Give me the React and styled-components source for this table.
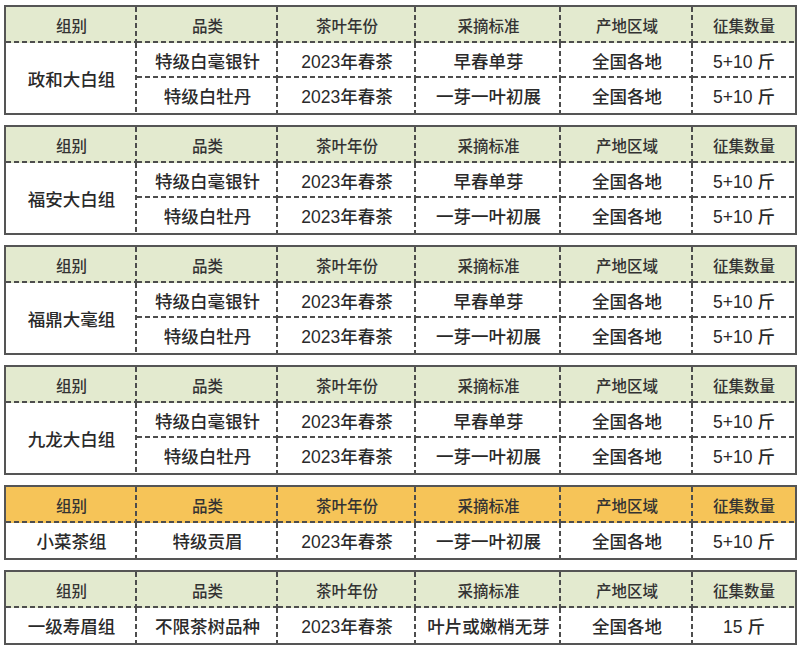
import React from "react";
import styled, { createGlobalStyle } from "styled-components";

const LINE = "#4d4d4d";

const GlobalStyle = createGlobalStyle`
  html, body { margin: 0; padding: 0; background: #ffffff; }
  body { font-family: "Liberation Sans", "Noto Sans CJK SC", sans-serif; }
`;

const Page = styled.div`
  width: 800px;
  padding: 5px 0 0 4px;
  box-sizing: border-box;
  display: flex;
  flex-direction: column;
  gap: 10px;
`;

const Table = styled.div`
  width: 793px;
  box-sizing: border-box;
  border: 2px solid #555555;
  display: grid;
  grid-template-columns: 131px 141px 138px 145px 132px 102px;
  grid-template-rows: 36px repeat(${(p) => p.$rows}, 35px);
`;

const dashH = `linear-gradient(to right, ${LINE} 0 5px, transparent 5px 8px)`;
const dashV = `linear-gradient(to bottom, ${LINE} 0 5px, transparent 5px 8px)`;

const lines = (p) => {
  const imgs = [];
  const pos = [];
  const size = [];
  const rep = [];
  if (p.$bottom) {
    imgs.push(dashH);
    pos.push("left bottom");
    size.push("8px 2px");
    rep.push("repeat-x");
  }
  if (p.$right) {
    imgs.push(dashV);
    pos.push("right top");
    size.push("2px 8px");
    rep.push("repeat-y");
  }
  if (!imgs.length) return "background-image: none;";
  return `
    background-image: ${imgs.join(", ")};
    background-position: ${pos.join(", ")};
    background-size: ${size.join(", ")};
    background-repeat: ${rep.join(", ")};
  `;
};

const HeadCell = styled.div`
  display: flex;
  align-items: center;
  justify-content: center;
  font-size: 15.5px;
  font-weight: 500;
  color: #333333;
  background-color: ${(p) => (p.$tone === "orange" ? "#f6c458" : "#e3eacf")};
  ${lines}
`;

const Cell = styled.div`
  display: flex;
  align-items: center;
  justify-content: center;
  font-size: 17.5px;
  font-weight: 500;
  color: #2a2a2a;
  grid-row: ${(p) => (p.$span ? `span ${p.$span}` : "auto")};
  ${lines}
`;

const HEAD = ["组别", "品类", "茶叶年份", "采摘标准", "产地区域", "征集数量"];

const twoRows = [
  ["特级白毫银针", "2023年春茶", "早春单芽", "全国各地", "5+10 斤"],
  ["特级白牡丹", "2023年春茶", "一芽一叶初展", "全国各地", "5+10 斤"],
];

const GROUPS = [
  { name: "政和大白组", rows: twoRows },
  { name: "福安大白组", rows: twoRows },
  { name: "福鼎大毫组", rows: twoRows },
  { name: "九龙大白组", rows: twoRows },
  {
    name: "小菜茶组",
    tone: "orange",
    rows: [["特级贡眉", "2023年春茶", "一芽一叶初展", "全国各地", "5+10 斤"]],
  },
  {
    name: "一级寿眉组",
    rows: [["不限茶树品种", "2023年春茶", "叶片或嫩梢无芽", "全国各地", "15 斤"]],
  },
];

function GroupTable({ group }) {
  const n = group.rows.length;
  return (
    <Table $rows={n}>
      {HEAD.map((h, i) => (
        <HeadCell key={h} $tone={group.tone} $bottom $right={i < HEAD.length - 1}>
          {h}
        </HeadCell>
      ))}
      <Cell $span={n} $right>
        {group.name}
      </Cell>
      {group.rows.map((row, r) =>
        row.map((v, c) => (
          <Cell key={`${r}-${c}`} $right={c < row.length - 1} $bottom={r < n - 1}>
            {v}
          </Cell>
        ))
      )}
    </Table>
  );
}

export default function App() {
  return (
    <>
      <GlobalStyle />
      <Page>
        {GROUPS.map((g) => (
          <GroupTable key={g.name} group={g} />
        ))}
      </Page>
    </>
  );
}
